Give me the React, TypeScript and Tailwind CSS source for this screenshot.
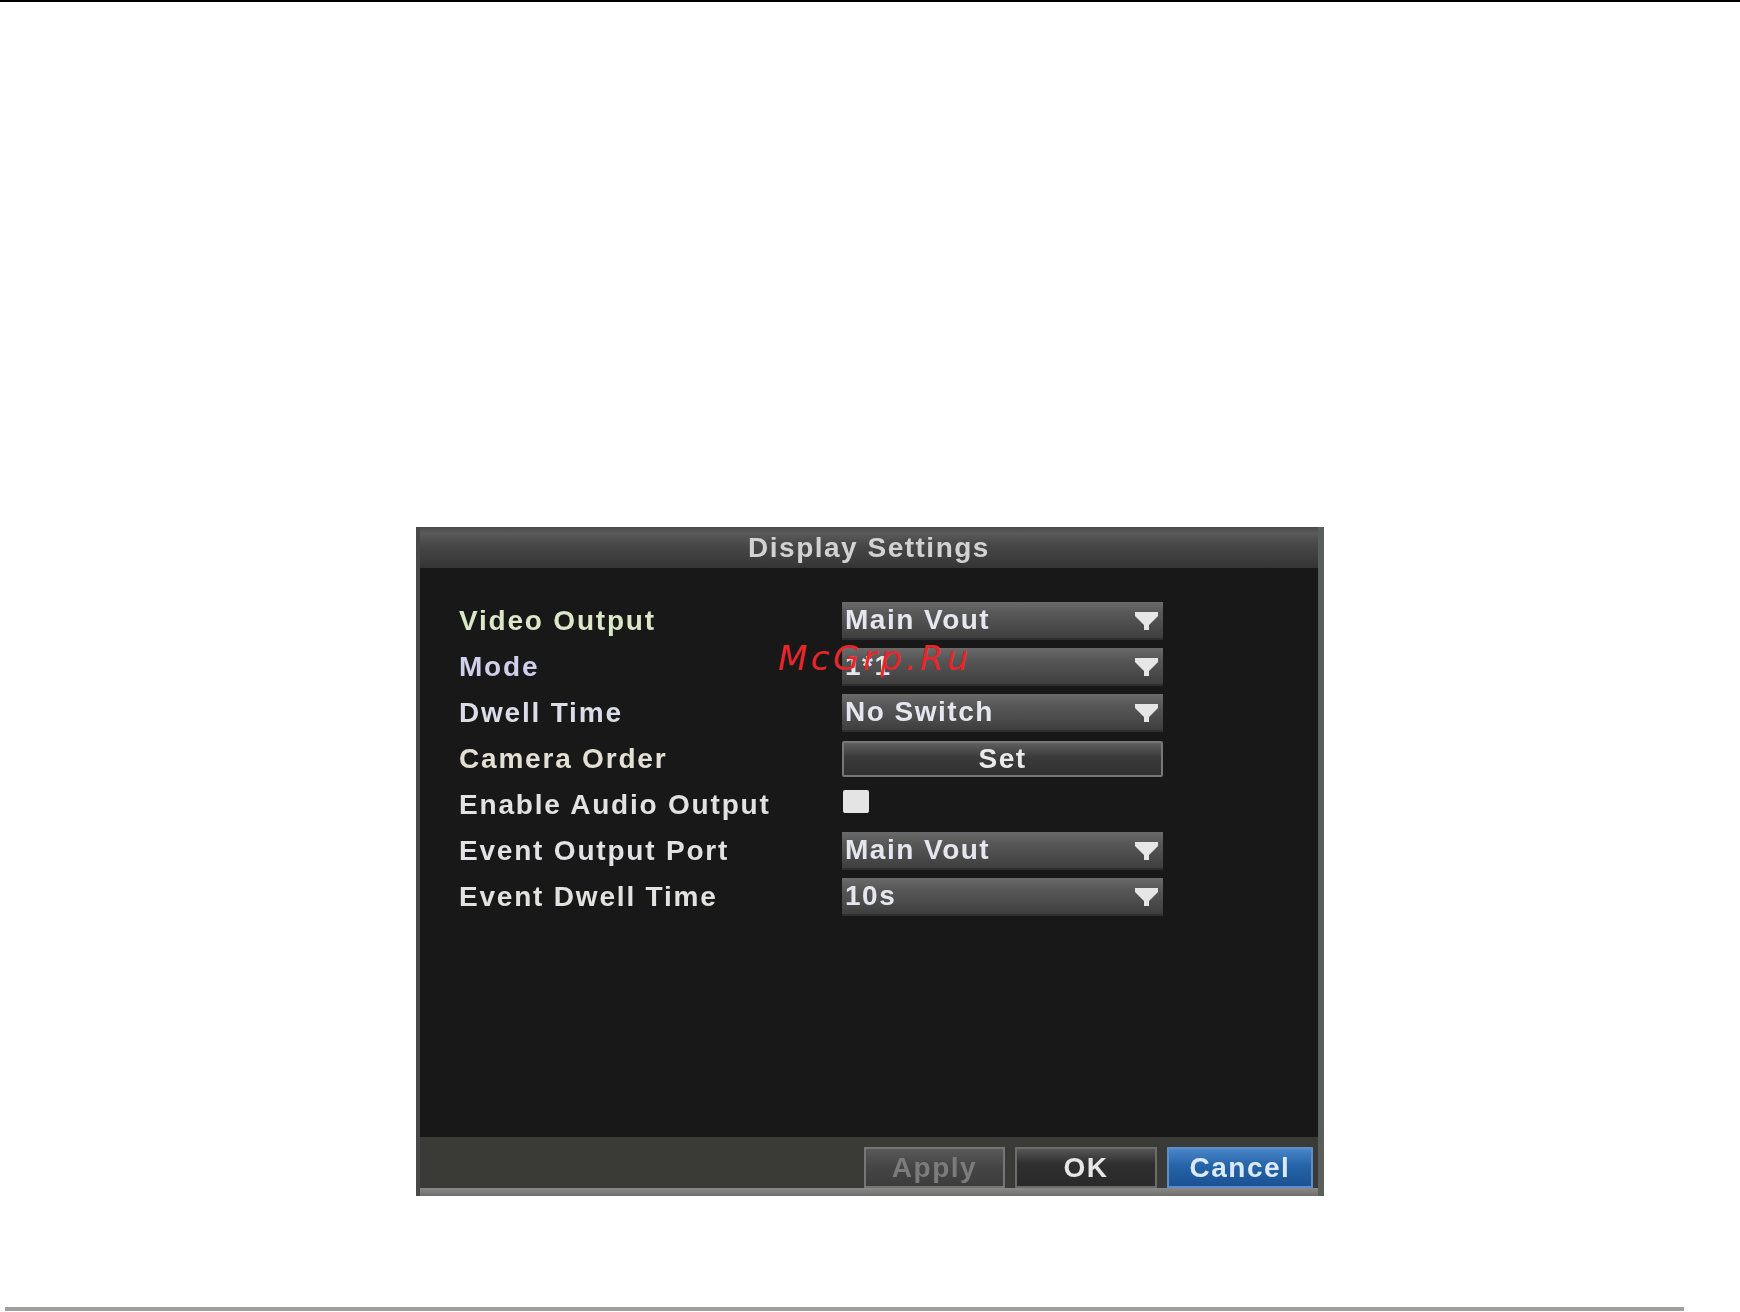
const FONT = "font-['Liberation_Sans',Arial,sans-serif]";

const rows: { label: string; tint: string; kind: 'select' | 'button' | 'check'; value?: string }[] = [
  { label: 'Video Output', tint: 'text-[#dbe8c8]', kind: 'select', value: 'Main Vout' },
  { label: 'Mode', tint: 'text-[#cfd0ec]', kind: 'select', value: '1*1' },
  { label: 'Dwell Time', tint: 'text-[#dcdce8]', kind: 'select', value: 'No Switch' },
  { label: 'Camera Order', tint: 'text-[#e4e0d4]', kind: 'button', value: 'Set' },
  { label: 'Enable Audio Output', tint: 'text-[#e2e2e2]', kind: 'check' },
  { label: 'Event Output Port', tint: 'text-[#e2e2e4]', kind: 'select', value: 'Main Vout' },
  { label: 'Event Dwell Time', tint: 'text-[#e2e2de]', kind: 'select', value: '10s' },
];

function Arrow() {
  return (
    <svg width="27" height="26" viewBox="0 0 27 26" className="shrink-0">
      <polygon points="2,5 25,5 25,9 16,18 16,23 11,23 11,18 2,9" fill="#e6e6e6" />
    </svg>
  );
}

function Select({ value }: { value: string }) {
  return (
    <div className="flex h-[38px] w-[321px] items-center justify-between border-b-2 border-[#2e2e2e] bg-[linear-gradient(#6b6b6b,#585858_30%,#4a4a4a_70%,#3e3e3e)] pl-[3px] pr-[3px]">
      <span className="text-[28px] font-bold leading-none tracking-[1.5px] text-[#e6e6f0]">{value}</span>
      <Arrow />
    </div>
  );
}

function SetButton({ value }: { value: string }) {
  return (
    <div className="flex h-[36px] w-[321px] items-center justify-center rounded-[2px] border-2 border-[#777] bg-[linear-gradient(#5e5e5e,#3a3a3a_45%,#303030)] px-2">
      <span className="text-[28px] font-bold leading-none tracking-[1.5px] text-[#eaeaea]">{value}</span>
    </div>
  );
}

export default function App() {
  return (
    <div className={`flex h-[1312px] w-[1740px] flex-col bg-white ${FONT}`}>
      <div className="h-[2px] w-full bg-black" />

      {/* dialog */}
      <div className="relative ml-[416px] mt-[525px] h-[669px] w-[908px]">
        <div className="flex h-full w-full flex-col border-l-4 border-r-[6px] border-l-[#484848] border-r-[#5a5e5c] bg-[#181818] blur-[0.6px]">
          <div className="flex h-[41px] items-center justify-center bg-[linear-gradient(#4a4a4a,#5a5a5a_15%,#474747_45%,#3c3c3c_80%,#343434)]">
            <span className="text-[28px] font-bold leading-none tracking-[1.5px] text-[#d2d2d2]">Display Settings</span>
          </div>

          <div className="flex-1 pl-[39px] pt-[30px]">
            {rows.map((r) => (
              <div key={r.label} className="flex h-[46px] items-center">
                <span className={`w-[383px] text-[28px] font-bold leading-none tracking-[1.8px] ${r.tint}`}>
                  {r.label}
                </span>
                {r.kind === 'select' && <Select value={r.value!} />}
                {r.kind === 'button' && <SetButton value={r.value!} />}
                {r.kind === 'check' && (
                  <div className="mb-[8px] ml-px h-[23px] w-[26px] rounded-[2px] bg-[#e4e4e4]" />
                )}
              </div>
            ))}
          </div>

          {/* footer */}
          <div className="flex h-[51px] items-end justify-end gap-[10px] bg-[#3a3a36] pr-[5px]">
            <div className="flex h-[41px] w-[141px] items-center justify-center border-2 border-[#767676] bg-[linear-gradient(#585858,#454545_50%,#3c3c3c)]">
              <span className="text-[28px] font-bold leading-none tracking-[1.5px] text-[#7c7c7c]">Apply</span>
            </div>
            <div className="flex h-[41px] w-[142px] items-center justify-center border-2 border-[#6c6c6c] bg-[linear-gradient(#555,#2f2f2f_40%,#2a2a2a)]">
              <span className="text-[28px] font-bold leading-none tracking-[1.5px] text-[#e6e6e6]">OK</span>
            </div>
            <div className="flex h-[41px] w-[146px] items-center justify-center border-2 border-[#5d8fcc] bg-[linear-gradient(#4a86c8,#2464a8_45%,#1b5294)]">
              <span className="text-[28px] font-bold leading-none tracking-[1.5px] text-[#dde9f6]">Cancel</span>
            </div>
          </div>
          <div className="h-[8px] bg-[linear-gradient(#8a8a88,#6e6e6c)]" />
        </div>

        {/* watermark */}
        <span className="absolute left-[362px] top-[114px] font-['DejaVu_Sans',sans-serif] text-[34px] italic leading-none tracking-[3.5px] text-[#e5262b]">
          McGrp.Ru
        </span>
      </div>

      <div className="ml-[5px] mt-[111px] h-[4px] w-[1679px] bg-[#a0a09e]" />
    </div>
  );
}
